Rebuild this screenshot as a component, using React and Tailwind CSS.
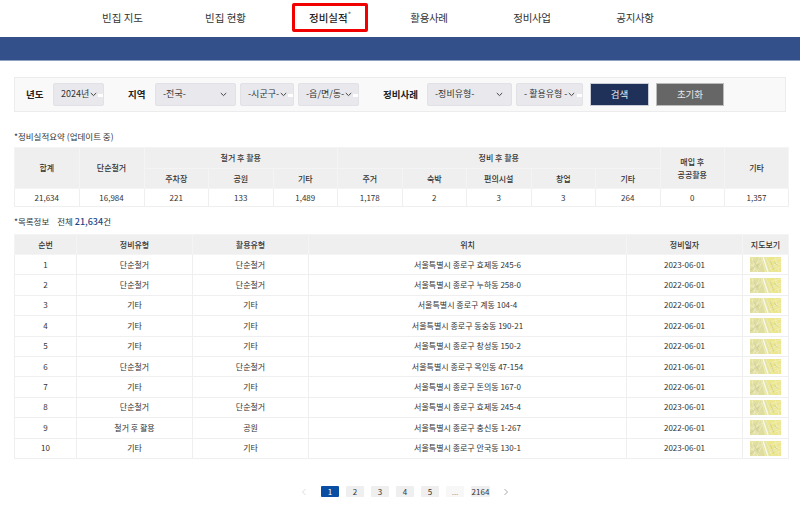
const FONT = "font-['Noto_Sans_CJK_KR','Noto_Sans',sans-serif]";

function Chevron({ className = "" }) {
  return (
    <svg width="7" height="5" viewBox="0 0 7 5" className={className} fill="none" stroke="#444" strokeWidth="1">
      <path d="M0.8 1 L3.5 3.6 L6.2 1" />
    </svg>
  );
}

function Select({ label, w, pl, gapRight = false }) {
  return (
    <div className={`relative h-[23px] ${w} ${pl} flex items-center bg-[#e9e9ed] border border-[#e2e2e6] rounded-[2px] text-[9px] text-[#333] shrink-0 ${gapRight ? "justify-between pr-[8px]" : ""}`}>
      <span className="whitespace-nowrap">{label}</span>
      <Chevron className={gapRight ? "" : "ml-[1px] shrink-0"} />
      {!gapRight && <div className="absolute right-0 top-[10px] h-[3px] w-[5px] bg-white" />}
    </div>
  );
}

function MapThumb() {
  return (
    <svg width="31" height="15" viewBox="0 0 31 15" className="block mx-auto">
      <rect width="31" height="15" fill="#e6e39c" />
      <path d="M0 4 L11 0 L13 0 L14 15 L0 15 Z" fill="#dfdd9f" />
      <path d="M17 0 L31 0 L31 15 L22 15 Z" fill="#ece68c" />
      <path d="M11 0 L16 15 M16 0 L22 15 M0 9 L13 3 M3 15 L10 0 M7 15 L12 5 M19 4 L31 1 M21 9 L31 5 M23 13 L31 10 M25 0 L29 15 M2 0 L5 15 M0 6 L8 15 M19 12 L31 7" stroke="#f1efc4" strokeWidth="0.7" fill="none" />
      <path d="M13 0 L18 15" stroke="#f7f7ea" strokeWidth="1.5" fill="none" />
      <path d="M0 13 L9 7 M4 4 L9 12 M24 5 L28 9 M20 3 L24 13" stroke="#c2c59c" strokeWidth="0.6" fill="none" />
    </svg>
  );
}

const rows = [
  ["1", "단순철거", "단순철거", "서울특별시 종로구 효제동 245-6", "2023-06-01"],
  ["2", "단순철거", "단순철거", "서울특별시 종로구 누하동 258-0", "2022-06-01"],
  ["3", "기타", "기타", "서울특별시 종로구 계동 104-4", "2022-06-01"],
  ["4", "기타", "기타", "서울특별시 종로구 동숭동 190-21", "2022-06-01"],
  ["5", "기타", "기타", "서울특별시 종로구 창성동 150-2", "2022-06-01"],
  ["6", "단순철거", "단순철거", "서울특별시 종로구 옥인동 47-154", "2021-06-01"],
  ["7", "기타", "기타", "서울특별시 종로구 돈의동 167-0", "2022-06-01"],
  ["8", "단순철거", "단순철거", "서울특별시 종로구 효제동 245-4", "2023-06-01"],
  ["9", "철거 후 활용", "공원", "서울특별시 종로구 충신동 1-267", "2022-06-01"],
  ["10", "기타", "기타", "서울특별시 종로구 안국동 130-1", "2023-06-01"],
];

const th = "bg-[#efefef] border border-[#f4f4f4] font-medium text-[8px] text-[#333] text-center p-0 align-middle";
const td = "border border-[#efefef] text-[8px] text-[#333] text-center p-0 align-middle";

export default function App() {
  return (
    <div className={`w-[800px] h-[506px] bg-white overflow-hidden ${FONT}`}>
      <nav className="h-[37px] flex items-start pt-[3px] pl-[71px] text-[10.5px] text-[#333]">
        <div className="w-[103px] h-[29px] flex items-center justify-center">빈집 지도</div>
        <div className="w-[103px] h-[29px] flex items-center justify-center">빈집 현황</div>
        <div className="ml-[15px] w-[76px] h-[29px] flex items-center justify-center border-[3px] border-[#f10000] rounded-[2px] font-medium text-[#222] whitespace-nowrap">
          정비실적<span className="text-[7px] -mt-[6px] text-[#666]">*</span>
        </div>
        <div className="ml-[19px] w-[84px] h-[29px] flex items-center justify-center -tracking-[0.3px]">활용사례</div>
        <div className="ml-[19px] w-[84px] h-[29px] flex items-center justify-center -tracking-[0.3px]">정비사업</div>
        <div className="ml-[19px] w-[84px] h-[29px] flex items-center justify-center -tracking-[0.3px]">공지사항</div>
      </nav>
      <div className="h-[24px] bg-[#34508a] border-b border-[#8fa0c0]" />

      <div className="mx-[14px] mt-[16px] h-[35px] bg-[#f9f9f9] border border-[#ececec] flex items-center pl-[11px] pb-[1px] text-[#222]">
        <span className="text-[9.5px] font-bold w-[27px] shrink-0">년도</span>
        <Select label="2024년" w="w-[51px]" pl="pl-[7px]" />
        <span className="text-[9.5px] font-bold ml-[24px] w-[27px] shrink-0">지역</span>
        <Select label="-전국-" w="w-[81px]" pl="pl-[7px]" gapRight />
        <div className="w-[4px] shrink-0" />
        <Select label="-시군구-" w="w-[54px]" pl="pl-[7px]" />
        <div className="w-[4px] shrink-0" />
        <Select label="-읍/면/동-" w="w-[61px]" pl="pl-[7px]" />
        <span className="text-[9.5px] font-bold ml-[24px] w-[44px] shrink-0">정비사례</span>
        <Select label="-정비유형-" w="w-[85px]" pl="pl-[7px]" gapRight />
        <div className="w-[4px] shrink-0" />
        <Select label="- 활용유형 -" w="w-[67px]" pl="pl-[7px]" />
        <div className="ml-[7px] w-[59px] h-[23px] bg-[#1f3158] border border-[#c8ccd6] text-[#e8e8e8] text-[9.5px] flex items-center justify-center shrink-0">검색</div>
        <div className="ml-[7px] w-[68px] h-[23px] bg-[#666666] border border-[#bbb] text-[#e8e8e8] text-[9.5px] flex items-center justify-center shrink-0">초기화</div>
      </div>

      <p className="mx-[14px] mt-[17px] h-[14px] leading-[14px] text-[8.5px] text-[#333]">*정비실적요약 (업데이트 중)</p>
      <table className="ml-[14px] mt-[4px] w-[774px] table-fixed border-collapse">
        <colgroup>
          <col className="w-[64.5px]" /><col className="w-[65px]" /><col className="w-[64.5px]" /><col className="w-[64.5px]" /><col className="w-[64.5px]" /><col className="w-[64.5px]" /><col className="w-[64.5px]" /><col className="w-[64.5px]" /><col className="w-[64.5px]" /><col className="w-[64.5px]" /><col className="w-[64.5px]" /><col className="w-[64px]" />
        </colgroup>
        <thead>
          <tr className="h-[21px]">
            <th rowSpan={2} className={th}>합계</th>
            <th rowSpan={2} className={th}>단순철거</th>
            <th colSpan={3} className={th}>철거 후 활용</th>
            <th colSpan={5} className={th}>정비 후 활용</th>
            <th rowSpan={2} className={`${th} leading-[13px]`}>매입 후<br />공공활용</th>
            <th rowSpan={2} className={th}>기타</th>
          </tr>
          <tr className="h-[20px]">
            {["주차장", "공원", "기타", "주거", "숙박", "편의시설", "창업", "기타"].map((h, i) => (
              <th key={i} className={th}>{h}</th>
            ))}
          </tr>
        </thead>
        <tbody>
          <tr className="h-[18px]">
            {["21,634", "16,984", "221", "133", "1,489", "1,178", "2", "3", "3", "264", "0", "1,357"].map((v, i) => (
              <td key={i} className={td}>{v}</td>
            ))}
          </tr>
        </tbody>
      </table>

      <p className="mx-[14px] mt-[7px] h-[15px] leading-[15px] text-[8.5px] text-[#333]">
        *목록정보<span className="ml-[8px]">전체 </span><span className="text-[#1d4586] font-medium text-[9px]">21,634</span>건
      </p>
      <table className="ml-[14px] mt-[5px] w-[774px] table-fixed border-collapse">
        <colgroup>
          <col className="w-[62px]" /><col className="w-[116px]" /><col className="w-[116px]" /><col className="w-[318px]" /><col className="w-[116px]" /><col className="w-[46px]" />
        </colgroup>
        <thead>
          <tr className="h-[20px]">
            {["순번", "정비유형", "활용유형", "위치", "정비일자", "지도보기"].map((h) => (
              <th key={h} className={th}>{h}</th>
            ))}
          </tr>
        </thead>
        <tbody>
          {rows.map((r) => (
            <tr key={r[0]} className="h-[20.4px]">
              {r.map((c, i) => (
                <td key={i} className={td}>{c}</td>
              ))}
              <td className={td}><MapThumb /></td>
            </tr>
          ))}
        </tbody>
      </table>

      <div className="mt-[27px] ml-[301px] flex items-center h-[12px] text-[8px] text-[#333]">
        <svg width="6" height="8" viewBox="0 0 6 8" className="mr-[14px]" fill="none" stroke="#ddd"><path d="M4.5 1 L1.5 4 L4.5 7" /></svg>
        <div className="w-[18px] h-[11px] bg-[#0a4ea3] text-white flex items-center justify-center rounded-[1px]">1</div>
        {["2", "3", "4", "5"].map((n) => (
          <div key={n} className="ml-[7px] w-[18px] h-[11px] bg-[#efefef] flex items-center justify-center rounded-[1px]">{n}</div>
        ))}
        <div className="ml-[7px] w-[18px] h-[11px] bg-[#f7f7f7] text-[#999] flex items-center justify-center rounded-[1px]">...</div>
        <div className="ml-[7px] w-[19px] h-[11px] bg-[#efefef] flex items-center justify-center rounded-[1px]">2164</div>
        <svg width="6" height="8" viewBox="0 0 6 8" className="ml-[13px]" fill="none" stroke="#aaa"><path d="M1.5 1 L4.5 4 L1.5 7" /></svg>
      </div>
    </div>
  );
}
